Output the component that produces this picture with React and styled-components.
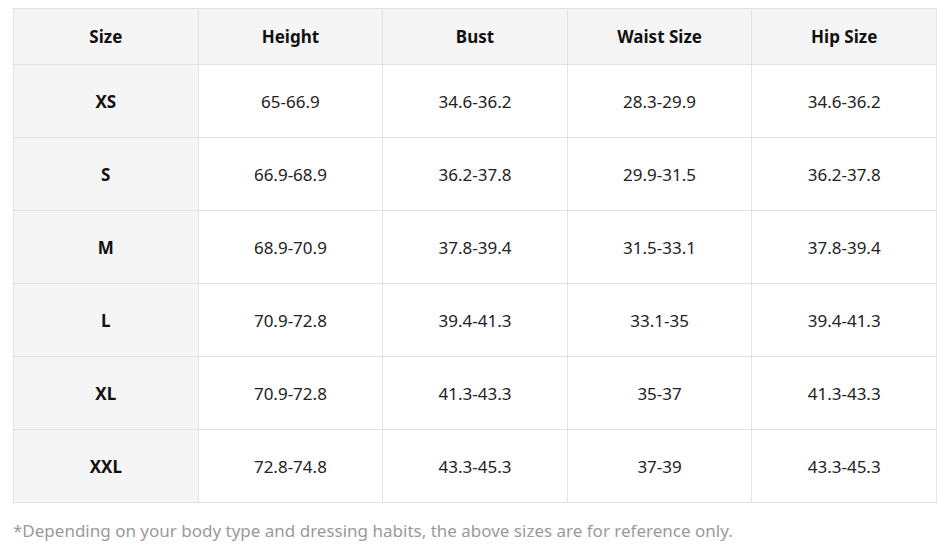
import React from "react";
import styled, { createGlobalStyle } from "styled-components";

const GlobalStyle = createGlobalStyle`
  body {
    margin: 0;
    background: #fff;
    font-family: "Noto Sans", "Open Sans", sans-serif;
  }
`;

const Page = styled.div`
  padding: 8px 0 0 13px;
  width: 924px;
`;

const Table = styled.table`
  width: 924px;
  border-collapse: collapse;
  table-layout: fixed;
  border: 1px solid #e3e3e3;
`;

const HeadCell = styled.th`
  height: 55px;
  padding: 0;
  background: #f5f5f5;
  border: 1px solid #e3e3e3;
  font-size: 17px;
  font-weight: 700;
  color: #111;
  text-align: center;
`;

const Cell = styled.td`
  height: 72px;
  padding: 0;
  border: 1px solid #e3e3e3;
  background: ${(p) => (p.$label ? "#f5f5f5" : "#fff")};
  font-size: 17px;
  font-weight: ${(p) => (p.$label ? 700 : 400)};
  color: ${(p) => (p.$label ? "#111" : "#222")};
  text-align: center;
`;

const Note = styled.p`
  margin: 16px 0 0;
  font-size: 17px;
  color: #9a9a9a;
`;

const headers = ["Size", "Height", "Bust", "Waist Size", "Hip Size"];

const rows = [
  ["XS", "65-66.9", "34.6-36.2", "28.3-29.9", "34.6-36.2"],
  ["S", "66.9-68.9", "36.2-37.8", "29.9-31.5", "36.2-37.8"],
  ["M", "68.9-70.9", "37.8-39.4", "31.5-33.1", "37.8-39.4"],
  ["L", "70.9-72.8", "39.4-41.3", "33.1-35", "39.4-41.3"],
  ["XL", "70.9-72.8", "41.3-43.3", "35-37", "41.3-43.3"],
  ["XXL", "72.8-74.8", "43.3-45.3", "37-39", "43.3-45.3"],
];

const App = () => {
  return (
    <Page>
      <GlobalStyle />
      <Table>
        <thead>
          <tr>
            {headers.map((h) => (
              <HeadCell key={h}>{h}</HeadCell>
            ))}
          </tr>
        </thead>
        <tbody>
          {rows.map((row) => (
            <tr key={row[0]}>
              {row.map((value, idx) => (
                <Cell key={idx} $label={idx === 0}>
                  {value}
                </Cell>
              ))}
            </tr>
          ))}
        </tbody>
      </Table>
      <Note>
        *Depending on your body type and dressing habits, the above sizes are
        for reference only.
      </Note>
    </Page>
  );
};

export default App;
